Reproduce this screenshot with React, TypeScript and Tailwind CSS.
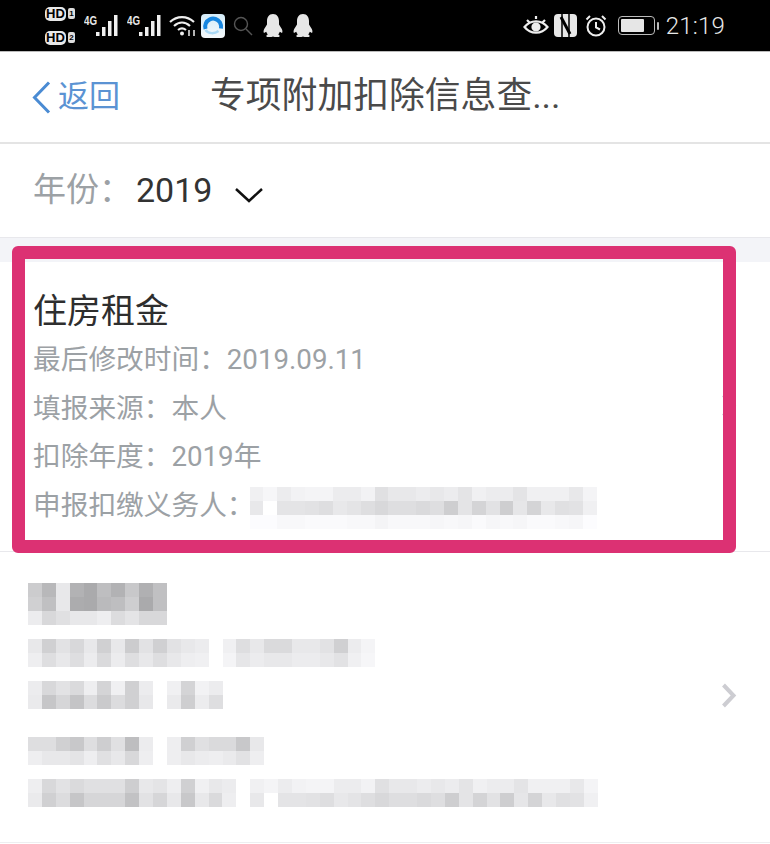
import React from "react";

const cjk = "font-['Roboto','Noto_Sans_CJK_SC',sans-serif]";

function Blur({ rows }: { rows: number[][] }) {
  return (
    <div className="flex flex-col">
      {rows.map((r, i) => (
        <div key={i} className="flex h-[14px]">
          {r.map((g, j) => (
            <div key={j} className="w-[13.900px] h-[14px]" style={{ backgroundColor: `rgb(${g},${g},${g + 2})` }} />
          ))}
        </div>
      ))}
    </div>
  );
}

function Signal() {
  return (
    <div className="flex items-start w-[36px] h-[24px] relative">
      <span className="text-[13px] leading-[12px] font-bold text-[#e8e8e8] font-['Liberation_Sans',sans-serif] scale-x-75 origin-left mt-[1px]">4G</span>
      <svg className="absolute left-[12px] top-0" width="24" height="24" viewBox="0 0 24 24" fill="#f0f0f0">
        <rect x="0" y="18" width="3.500" height="4" />
        <rect x="6" y="13" width="3.500" height="9" />
        <rect x="12" y="7" width="3.500" height="15" />
        <rect x="18" y="1" width="3.500" height="21" />
      </svg>
    </div>
  );
}

function HD({ n }: { n: string }) {
  return (
    <div className="flex items-center gap-[2px] h-[14px]">
      <span className="w-[21px] h-[14px] rounded-[5px] bg-[#e8e8e8] text-black text-[13px] leading-[14px] font-bold text-center font-['Liberation_Sans',sans-serif]">HD</span>
      <span className="w-[7px] h-[11px] rounded-[2px] bg-[#ddd] text-black text-[8px] leading-[11px] font-bold text-center font-['Liberation_Sans',sans-serif]">{n}</span>
    </div>
  );
}

function QQ() {
  return (
    <svg width="20" height="24" viewBox="0 0 20 24" fill="#e6e6e6">
      <path d="M10 0C5.800 0 4 3.400 4 7v3.500L1.200 15C.4 16.600.4 18.400 1 19l2.200-1.200c.4 1.200 1 2 1.600 2.600C3.400 21 2.600 22 4 23h4.400l1.600-.6 1.600.6H16c1.400-1 .6-2-.8-2.600.6-.6 1.200-1.400 1.600-2.600L19 19c.6-.6.6-2.400-.2-4L16 10.500V7c0-3.600-1.800-7-6-7z" />
    </svg>
  );
}

function Chevron() {
  return (
    <svg width="16" height="25" viewBox="0 0 16 25" fill="none" stroke="#cdcdd2" strokeWidth="4" className="shrink-0 mr-[-1px] mb-[3px]">
      <path d="M2.500 2l10 10.500-10 10.500" />
    </svg>
  );
}

function Line({ children }: { children: React.ReactNode }) {
  return <div className="h-[48.500px] leading-[48.500px] text-[27.700px] text-[#9ca1a5] whitespace-nowrap">{children}</div>;
}

export default function App() {
  return (
    <div className={`relative w-[770px] h-[844px] bg-white overflow-hidden ${cjk}`}>
      {/* status bar */}
      <div className="h-[52px] bg-black border-b border-b-[#bbb] flex items-center pl-[45px] pr-[45px]">
        <div className="flex flex-col gap-[10px] w-[39px]">
          <HD n="1" />
          <HD n="2" />
        </div>
        <div className="flex gap-[7px] items-center">
          <Signal />
          <Signal />
        </div>
        <svg className="ml-[6px]" width="28" height="22" viewBox="0 0 28 22" fill="none" stroke="#eee" strokeWidth="2.200">
          <path d="M1 7c7-6.500 17-6.500 24 0" />
          <path d="M5 11c5-4.500 11-4.500 16 0" />
          <path d="M9 15c2.500-2 5.500-2 8 0" />
          <circle cx="13" cy="18.500" r="2" fill="#eee" stroke="none" />
          <path d="M20 15v6M25 15v6" strokeWidth="1.500" />
        </svg>
        <div className="ml-[4px] w-[24px] h-[24px] rounded-[4px] bg-gradient-to-b from-[#d4ecf9] to-[#f4f8fb] flex items-center justify-center">
          <svg width="22" height="22" viewBox="0 0 22 22" fill="none">
            <path d="M3.500 14A8 8 0 0 1 18 7.500c1 1.800 1.300 3.800 1 6" stroke="#1786e0" strokeWidth="4" />
            <path d="M3.500 15c3 4 9 4 13 1" stroke="#a9d8f5" strokeWidth="2.500" />
          </svg>
        </div>
        <svg className="ml-[8px]" width="20" height="20" viewBox="0 0 20 20" fill="none" stroke="#555" strokeWidth="1.400">
          <circle cx="8" cy="8" r="6.500" />
          <path d="M13 13l6 6" />
        </svg>
        <div className="ml-[10px] flex gap-[10px]">
          <QQ />
          <QQ />
        </div>
        <div className="flex-1" />
        <svg width="26" height="22" viewBox="0 0 26 22" fill="none" stroke="#eee" strokeWidth="2.200">
          <path d="M1.500 12c6-7.500 17-7.500 23 0-6 7.500-17 7.500-23 0z" />
          <circle cx="13" cy="12" r="3.500" fill="#eee" />
          <path d="M4 5L6.500 7.500M22 5L19.500 7.500M13 1v3" />
        </svg>
        <svg className="ml-[5px]" width="23" height="23" viewBox="0 0 23 23">
          <rect width="23" height="23" rx="4" fill="#e8e8e8" />
          <path d="M4 0h4v23H4zM15 0h4v23h-4z" fill="#e8e8e8" />
          <path d="M8 0v23M15 0v23" stroke="#000" strokeWidth="1.500" />
          <path d="M7 3l9 17" stroke="#000" strokeWidth="3" fill="none" />
        </svg>
        <svg className="ml-[8px]" width="22" height="23" viewBox="0 0 22 23" fill="none" stroke="#eee" strokeWidth="2">
          <circle cx="11" cy="13" r="8.500" />
          <path d="M11 8v5.500l4 2M1.500 5.500L5 2M20.500 5.500L17 2" />
        </svg>
        <div className="ml-[11px] w-[37px] h-[19px] rounded-[4px] border border-[#bbb] p-[2px]">
          <div className="w-[23px] h-full bg-[#e6e6e6] rounded-[1px]" />
        </div>
        <div className="ml-[2px] w-[2px] h-[8px] bg-[#bbb] rounded-full" />
        <span className="ml-[7px] text-[24px] leading-[30px] text-[#e8e8e8] font-light tracking-[0.2px]">21:19</span>
      </div>

      {/* nav */}
      <div className="h-[92px] border-b-2 border-b-[#e4e4e4] flex items-center pl-[32px]">
        <svg width="19" height="33" viewBox="0 0 19 33" fill="none" stroke="#4a8bd3" strokeWidth="3" className="shrink-0">
          <path d="M17 1.500L2.500 16.500 17 31.500" />
        </svg>
        <span className="ml-[7px] text-[31px] text-[#5b93d3] leading-[40px] w-[152px]">返回</span>
        <span className="text-[35.800px] text-[#4a4a4a] leading-[44px] whitespace-nowrap mb-[2px]">专项附加扣除信息查...</span>
      </div>

      {/* year */}
      <div className="h-[94px] border-b border-b-[#e8e8ec] flex items-center pl-[33px]">
        <span className="text-[33px] text-[#9ca1a5] leading-[44px] w-[103px] mb-[2px]">年份：</span>
        <span className="text-[34px] text-[#333] leading-[44px] mb-[2px]">2019</span>
        <svg className="ml-[22px] mt-[10px]" width="30" height="17" viewBox="0 0 30 17" fill="none" stroke="#111" strokeWidth="2.500">
          <path d="M2 2l13 12L28 2" />
        </svg>
      </div>

      <div className="h-[24px] bg-[#f3f4f8]" />

      {/* card 1 */}
      <div className="h-[290px] border-b border-b-[#e8e8ec] pl-[33px] pr-[34px] flex items-center justify-between">
        <div className="self-start pt-[25px]">
          <div className="text-[34px] leading-[49px] text-[#2e2e2e]">住房租金</div>
          <Line>最后修改时间：2019.09.11</Line>
          <Line>填报来源：本人</Line>
          <Line>扣除年度：2019年</Line>
          <div className="flex">
            <Line>申报扣缴义务人：</Line>
            <div className="ml-[-5px] mt-[5px]">
              <Blur
                rows={[
                  [240,246,236,242,244,244,236,236,242,224,232,232,236,232,236,228,240,236,236,228,240,240,240,232,244],
                  [232,255,228,228,226,222,232,228,222,216,222,222,218,222,206,228,212,226,206,230,212,232,224,226,240],
                  [252,252,248,248,250,250,250,248,248,244,248,248,248,246,248,246,250,246,248,246,250,250,248,246,252],
                ]}
              />
            </div>
          </div>
        </div>
        <Chevron />
      </div>

      {/* card 2 */}
      <div className="h-[291px] border-b border-b-[#eeeef0] pl-[28px] pr-[34px] flex items-center justify-between">
        <div className="self-start flex flex-col pt-[31px]">
          <Blur
            rows={[
              [204,184,232,178,170,190,178,200,176,192],
              [208,192,232,172,170,186,190,206,170,192],
              [236,216,224,232,232,238,220,228,216,216],
            ]}
          />
          <div className="flex gap-[14px] mt-[14px]">
            <Blur
              rows={[
                [232,208,226,216,232,208,232,204,226,208,226,232,236],
                [238,222,232,222,236,218,236,222,232,222,232,238,240],
              ]}
            />
            <Blur
              rows={[
                [240,222,232,218,218,232,232,226,208,236,244],
                [244,230,236,232,232,236,236,232,226,240,246],
              ]}
            />
          </div>
          <div className="flex gap-[14px] mt-[14px]">
            <Blur
              rows={[
                [236,216,226,218,238,212,240,208,236],
                [234,198,214,196,220,202,220,208,232],
              ]}
            />
            <Blur
              rows={[
                [240,212,242,236],
                [234,206,236,222],
              ]}
            />
          </div>
          <div className="flex gap-[14px] mt-[28px]">
            <Blur
              rows={[
                [222,222,208,200,222,206,224,190,236],
                [238,232,232,228,238,224,232,216,238],
              ]}
            />
            <Blur
              rows={[
                [238,208,224,218,218,200,232],
                [238,232,236,238,234,226,238],
              ]}
            />
          </div>
          <div className="flex gap-[14px] mt-[14px]">
            <Blur
              rows={[
                [238,216,226,218,224,224,224,206,232,228,238,208,240,232,236],
                [234,208,220,198,214,214,214,194,226,214,232,200,232,218,238],
              ]}
            />
            <Blur
              rows={[
                [240,244,236,242,244,244,236,236,242,224,232,232,236,232,236,228,240,236,236,228,240,240,240,232,244],
                [232,255,228,228,226,222,232,228,222,216,222,222,218,222,206,228,212,226,206,230,212,232,224,226,240],
              ]}
            />
          </div>
        </div>
        <Chevron />
      </div>

      {/* annotation rectangle */}
      <div className="absolute left-[12px] top-[246px] w-[724px] h-[307px] border-[13px] border-[#dc3173] rounded-[6px]" />
    </div>
  );
}
